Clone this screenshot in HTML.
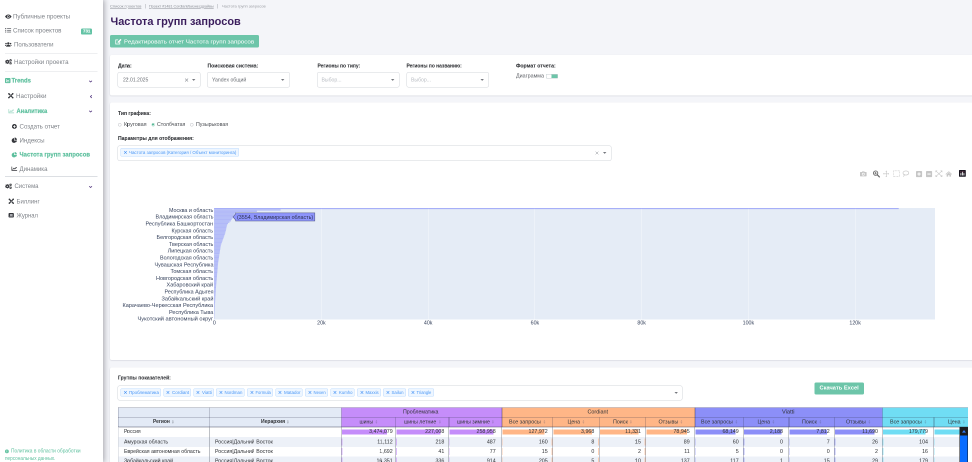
<!DOCTYPE html>
<html><head><meta charset="utf-8"><title>Частота групп запросов</title>
<style>
html,body{margin:0;padding:0;background:#f4f5f9;overflow:hidden;}
body{width:972px;height:462px;position:relative;font-family:"Liberation Sans",sans-serif;}
#w{position:absolute;left:0;top:0;width:1944px;height:924px;transform:scale(.5);transform-origin:0 0;overflow:hidden;will-change:transform;}
.t{position:absolute;white-space:nowrap;transform-origin:0 50%;font-family:"Liberation Sans",sans-serif;}
.r{position:absolute;box-sizing:border-box;}
svg{position:absolute;overflow:visible;}
</style></head><body><div id="w">
<div class="r" style="left:0.00px;top:0.00px;width:1944.00px;height:924.00px;background:#f4f5f9;"></div>
<div class="r" style="left:0.00px;top:0.00px;width:206.00px;height:924.00px;background:#ffffff;box-shadow:1.5px 0 11px 1px rgba(45,45,55,.40);"></div>
<span class="t" style="left:26.00px;top:26.32px;font-size:12.20px;line-height:14.64px;color:#7f8389;">Публичные проекты</span>
<span class="t" style="left:26.00px;top:54.32px;font-size:12.20px;line-height:14.64px;color:#7f8389;transform:scaleX(1.0196);">Список проектов</span>
<span class="t" style="left:28.20px;top:81.92px;font-size:12.20px;line-height:14.64px;color:#7f8389;transform:scaleX(0.9921);">Пользователи</span>
<div class="r" style="left:10.00px;top:105.60px;width:185.00px;height:1.40px;background:#dcdfe3;"></div>
<span class="t" style="left:28.20px;top:116.72px;font-size:12.20px;line-height:14.64px;color:#7f8389;transform:scaleX(1.0122);">Настройки проекта</span>
<div class="r" style="left:10.00px;top:141.60px;width:185.00px;height:1.40px;background:#dcdfe3;"></div>
<span class="t" style="left:23.00px;top:153.64px;font-size:12.60px;line-height:15.12px;color:#5cbf9d;font-weight:bold;transform:scaleX(0.9440);-webkit-text-stroke:0.3px #5cbf9d;">Trends</span>
<span class="t" style="left:32.00px;top:184.72px;font-size:12.20px;line-height:14.64px;color:#7f8389;transform:scaleX(1.0197);">Настройки</span>
<span class="t" style="left:33.40px;top:214.84px;font-size:12.60px;line-height:15.12px;color:#5cbf9d;font-weight:bold;transform:scaleX(0.9206);-webkit-text-stroke:0.3px #5cbf9d;">Аналитика</span>
<span class="t" style="left:39.00px;top:245.72px;font-size:12.20px;line-height:14.64px;color:#7f8389;transform:scaleX(1.0102);">Создать отчет</span>
<span class="t" style="left:39.00px;top:273.72px;font-size:12.20px;line-height:14.64px;color:#7f8389;transform:scaleX(1.0049);">Индексы</span>
<span class="t" style="left:39.00px;top:302.24px;font-size:12.60px;line-height:15.12px;color:#5cbf9d;font-weight:bold;transform:scaleX(0.9410);-webkit-text-stroke:0.3px #5cbf9d;">Частота групп запросов</span>
<span class="t" style="left:39.00px;top:330.52px;font-size:12.20px;line-height:14.64px;color:#7f8389;transform:scaleX(0.9966);">Динамика</span>
<div class="r" style="left:10.00px;top:352.40px;width:185.00px;height:1.40px;background:#dcdfe3;"></div>
<span class="t" style="left:29.20px;top:365.32px;font-size:12.20px;line-height:14.64px;color:#7f8389;transform:scaleX(0.9769);">Система</span>
<span class="t" style="left:32.60px;top:395.72px;font-size:12.20px;line-height:14.64px;color:#7f8389;transform:scaleX(0.9859);">Биллинг</span>
<span class="t" style="left:33.40px;top:423.72px;font-size:12.20px;line-height:14.64px;color:#7f8389;transform:scaleX(0.9614);">Журнал</span>
<div class="r" style="left:161.80px;top:57.20px;width:22.20px;height:12.00px;background:#63c3a5;border-radius:2.6px;"></div>
<span class="t" style="left:165.60px;top:57.49px;font-size:8.60px;line-height:10.32px;color:#fff;font-weight:bold;transform:scaleX(1.0314);-webkit-text-stroke:0.2px #fff;">731</span>
<span class="t" style="left:21.60px;top:895.66px;font-size:10.40px;line-height:12.48px;color:#5cbf9d;transform:scaleX(0.9337);">Политика в области обработки</span>
<span class="t" style="left:10.00px;top:910.66px;font-size:10.40px;line-height:12.48px;color:#5cbf9d;transform:scaleX(0.9056);">персональных данных.</span>
<span class="t" style="left:219.80px;top:8.04px;font-size:7.80px;line-height:9.36px;color:#8b8f96;transform:scaleX(1.0325);text-decoration:underline;">Список проектов</span>
<div class="r" style="left:290.40px;top:8.20px;width:1.10px;height:8.60px;background:#a9acb2;"></div>
<span class="t" style="left:298.20px;top:8.04px;font-size:7.80px;line-height:9.36px;color:#8b8f96;transform:scaleX(0.9494);text-decoration:underline;">Проект #1481 Cordiant/Бизнесдрайвы</span>
<div class="r" style="left:435.20px;top:8.20px;width:1.10px;height:8.60px;background:#a9acb2;"></div>
<span class="t" style="left:444.40px;top:8.04px;font-size:7.80px;line-height:9.36px;color:#989ba1;transform:scaleX(1.0143);">Частота групп запросов</span>
<span class="t" style="left:221.20px;top:29.61px;font-size:22.40px;line-height:26.88px;color:#3a1d5c;font-weight:bold;transform:scaleX(0.9783);">Частота групп запросов</span>
<div class="r" style="left:219.80px;top:70.40px;width:298.40px;height:25.00px;background:#6dc5a9;border-radius:3px;"></div>
<span class="t" style="left:247.60px;top:75.89px;font-size:11.80px;line-height:14.16px;color:#ffffff;transform:scaleX(1.0518);">Редактировать отчет Частота групп запросов</span>
<div class="r" style="left:219.60px;top:110.20px;width:1740.00px;height:80.60px;background:#ffffff;box-shadow:0 1px 2.5px rgba(60,60,90,.2);border-radius:3.5px 0 0 3.5px;"></div>
<div class="r" style="left:219.60px;top:204.80px;width:1740.00px;height:515.60px;background:#ffffff;box-shadow:0 1px 2.5px rgba(60,60,90,.2);border-radius:3.5px 0 0 3.5px;"></div>
<div class="r" style="left:219.60px;top:735.40px;width:1740.00px;height:200.00px;background:#ffffff;box-shadow:0 1px 2.5px rgba(60,60,90,.2);border-radius:3.5px 0 0 3.5px;"></div>
<span class="t" style="left:236.00px;top:126.26px;font-size:10.40px;line-height:12.48px;color:#2f3135;font-weight:bold;-webkit-text-stroke:0.12px #2f3135;">Дата:</span>
<span class="t" style="left:415.00px;top:126.26px;font-size:10.40px;line-height:12.48px;color:#2f3135;font-weight:bold;transform:scaleX(0.9776);-webkit-text-stroke:0.12px #2f3135;">Поисковая система:</span>
<span class="t" style="left:634.60px;top:126.26px;font-size:10.40px;line-height:12.48px;color:#2f3135;font-weight:bold;transform:scaleX(0.9489);-webkit-text-stroke:0.12px #2f3135;">Регионы по типу:</span>
<span class="t" style="left:813.40px;top:126.26px;font-size:10.40px;line-height:12.48px;color:#2f3135;font-weight:bold;transform:scaleX(0.9410);-webkit-text-stroke:0.12px #2f3135;">Регионы по названию:</span>
<span class="t" style="left:1032.00px;top:126.26px;font-size:10.40px;line-height:12.48px;color:#2f3135;font-weight:bold;transform:scaleX(0.9927);-webkit-text-stroke:0.12px #2f3135;">Формат отчета:</span>
<div class="r" style="left:235.20px;top:144.40px;width:166.20px;height:30.40px;background:#ffffff;border:1px solid #d3d6db;border-radius:4px;"></div>
<span class="t" style="left:245.60px;top:152.58px;font-size:10.80px;line-height:12.96px;color:#6b6f75;transform:scaleX(0.9361);">22.01.2025</span>
<svg style="left:384.20px;top:158.10px;" width="6.8" height="3.8" viewBox="0 0 3.4 1.9"><path d="M0 0H3.4L1.7 1.9Z" fill="#74777d"/></svg>
<svg style="left:370.00px;top:156.60px;" width="6.4" height="6.4" viewBox="0 0 3.2 3.2"><path d="M0.1 0.1L3.1 3.1M3.1 0.1L0.1 3.1" stroke="#858990" stroke-width="0.55" fill="none"/></svg>
<div class="r" style="left:414.20px;top:144.40px;width:165.40px;height:30.40px;background:#ffffff;border:1px solid #d3d6db;border-radius:4px;"></div>
<span class="t" style="left:423.60px;top:152.58px;font-size:10.80px;line-height:12.96px;color:#6b6f75;transform:scaleX(0.9504);">Yandex общий</span>
<svg style="left:562.40px;top:158.10px;" width="6.8" height="3.8" viewBox="0 0 3.4 1.9"><path d="M0 0H3.4L1.7 1.9Z" fill="#74777d"/></svg>
<div class="r" style="left:634.00px;top:144.40px;width:165.40px;height:30.40px;background:#ffffff;border:1px solid #d3d6db;border-radius:4px;"></div>
<span class="t" style="left:643.40px;top:152.58px;font-size:10.80px;line-height:12.96px;color:#b9bdc3;transform:scaleX(0.9486);">Выбор...</span>
<svg style="left:782.20px;top:158.10px;" width="6.8" height="3.8" viewBox="0 0 3.4 1.9"><path d="M0 0H3.4L1.7 1.9Z" fill="#74777d"/></svg>
<div class="r" style="left:812.60px;top:144.40px;width:165.40px;height:30.40px;background:#ffffff;border:1px solid #d3d6db;border-radius:4px;"></div>
<span class="t" style="left:822.00px;top:152.58px;font-size:10.80px;line-height:12.96px;color:#b9bdc3;transform:scaleX(0.9486);">Выбор...</span>
<svg style="left:960.80px;top:158.10px;" width="6.8" height="3.8" viewBox="0 0 3.4 1.9"><path d="M0 0H3.4L1.7 1.9Z" fill="#74777d"/></svg>
<span class="t" style="left:1032.00px;top:145.12px;font-size:10.60px;line-height:12.72px;color:#5d6066;transform:scaleX(1.0159);">Диаграмма</span>
<div class="r" style="left:1092.00px;top:148.00px;width:24.40px;height:9.00px;background:#6dc5a9;border:1px solid #c9ccd1;border-radius:1.5px;"></div>
<div class="r" style="left:1093.00px;top:149.00px;width:10.40px;height:7.00px;background:#ffffff;border-radius:1px;"></div>
<span class="t" style="left:236.00px;top:220.86px;font-size:10.40px;line-height:12.48px;color:#2f3135;font-weight:bold;transform:scaleX(0.9686);-webkit-text-stroke:0.12px #2f3135;">Тип графика:</span>
<div class="r" style="left:236.30px;top:245.50px;width:7.00px;height:7.00px;background:#ffffff;border-radius:50%;border:1px solid #b9bcc1;"></div>
<span class="t" style="left:248.40px;top:241.58px;font-size:10.80px;line-height:12.96px;color:#4a4d52;transform:scaleX(1.0099);">Круговая</span>
<div class="r" style="left:302.50px;top:245.50px;width:7.00px;height:7.00px;background:#ffffff;border-radius:50%;border:1px solid #9bd3c0;"></div>
<div class="r" style="left:303.90px;top:246.90px;width:4.20px;height:4.20px;background:#4fb592;border-radius:50%;"></div>
<span class="t" style="left:314.20px;top:241.58px;font-size:10.80px;line-height:12.96px;color:#4a4d52;transform:scaleX(0.9693);">Столбчатая</span>
<div class="r" style="left:380.10px;top:245.50px;width:7.00px;height:7.00px;background:#ffffff;border-radius:50%;border:1px solid #b9bcc1;"></div>
<span class="t" style="left:391.60px;top:241.58px;font-size:10.80px;line-height:12.96px;color:#4a4d52;transform:scaleX(0.9752);">Пузырьковая</span>
<span class="t" style="left:236.00px;top:271.46px;font-size:10.40px;line-height:12.48px;color:#2f3135;font-weight:bold;transform:scaleX(0.9774);-webkit-text-stroke:0.12px #2f3135;">Параметры для отображения:</span>
<div class="r" style="left:235.20px;top:290.60px;width:987.40px;height:31.00px;background:#ffffff;border:1px solid #d3d6db;border-radius:4px;"></div>
<div class="r" style="left:241.40px;top:296.00px;width:236.60px;height:17.40px;background:#eef6ff;border:1px solid #bfdcfe;border-radius:2px;"></div>
<svg style="left:247.90px;top:301.90px;" width="5.8" height="5.8" viewBox="0 0 2.9 2.9"><path d="M0.1 0.1L2.8 2.8M2.8 0.1L0.1 2.8" stroke="#3a8cf5" stroke-width="0.52" fill="none"/></svg>
<span class="t" style="left:258.40px;top:298.54px;font-size:9.40px;line-height:11.28px;color:#4a97f6;transform:scaleX(0.9417);">Частота запросов (Категория / Объект мониторинга)</span>
<svg style="left:1190.80px;top:302.80px;" width="6.0" height="6.0" viewBox="0 0 3.0 3.0"><path d="M0.1 0.1L2.9 2.9M2.9 0.1L0.1 2.9" stroke="#8d9096" stroke-width="0.5" fill="none"/></svg>
<svg style="left:1206.20px;top:304.10px;" width="6.8" height="3.8" viewBox="0 0 3.4 1.9"><path d="M0 0H3.4L1.7 1.9Z" fill="#74777d"/></svg>
<span class="t" style="left:236.00px;top:750.26px;font-size:10.40px;line-height:12.48px;color:#2f3135;font-weight:bold;transform:scaleX(0.9672);-webkit-text-stroke:0.12px #2f3135;">Группы показателей:</span>
<div class="r" style="left:235.20px;top:770.80px;width:1130.20px;height:29.80px;background:#ffffff;border:1px solid #d3d6db;border-radius:4px;"></div>
<div class="r" style="left:241.00px;top:776.60px;width:81.40px;height:16.60px;background:#eef6ff;border:1px solid #bfdcfe;border-radius:2px;"></div>
<svg style="left:247.50px;top:782.10px;" width="5.8" height="5.8" viewBox="0 0 2.9 2.9"><path d="M0.1 0.1L2.8 2.8M2.8 0.1L0.1 2.8" stroke="#3a8cf5" stroke-width="0.52" fill="none"/></svg>
<span class="t" style="left:258.00px;top:778.74px;font-size:9.40px;line-height:11.28px;color:#4a97f6;transform:scaleX(0.9453);">Проблематика</span>
<div class="r" style="left:326.60px;top:776.60px;width:55.80px;height:16.60px;background:#eef6ff;border:1px solid #bfdcfe;border-radius:2px;"></div>
<svg style="left:333.10px;top:782.10px;" width="5.8" height="5.8" viewBox="0 0 2.9 2.9"><path d="M0.1 0.1L2.8 2.8M2.8 0.1L0.1 2.8" stroke="#3a8cf5" stroke-width="0.52" fill="none"/></svg>
<span class="t" style="left:343.60px;top:778.74px;font-size:9.40px;line-height:11.28px;color:#4a97f6;transform:scaleX(0.9682);">Cordiant</span>
<div class="r" style="left:386.60px;top:776.60px;width:41.20px;height:16.60px;background:#eef6ff;border:1px solid #bfdcfe;border-radius:2px;"></div>
<svg style="left:393.10px;top:782.10px;" width="5.8" height="5.8" viewBox="0 0 2.9 2.9"><path d="M0.1 0.1L2.8 2.8M2.8 0.1L0.1 2.8" stroke="#3a8cf5" stroke-width="0.52" fill="none"/></svg>
<span class="t" style="left:403.60px;top:778.74px;font-size:9.40px;line-height:11.28px;color:#4a97f6;transform:scaleX(0.9552);">Viatti</span>
<div class="r" style="left:432.20px;top:776.60px;width:57.20px;height:16.60px;background:#eef6ff;border:1px solid #bfdcfe;border-radius:2px;"></div>
<svg style="left:438.70px;top:782.10px;" width="5.8" height="5.8" viewBox="0 0 2.9 2.9"><path d="M0.1 0.1L2.8 2.8M2.8 0.1L0.1 2.8" stroke="#3a8cf5" stroke-width="0.52" fill="none"/></svg>
<span class="t" style="left:449.20px;top:778.74px;font-size:9.40px;line-height:11.28px;color:#4a97f6;transform:scaleX(0.9260);">Nordman</span>
<div class="r" style="left:494.00px;top:776.60px;width:52.20px;height:16.60px;background:#eef6ff;border:1px solid #bfdcfe;border-radius:2px;"></div>
<svg style="left:500.50px;top:782.10px;" width="5.8" height="5.8" viewBox="0 0 2.9 2.9"><path d="M0.1 0.1L2.8 2.8M2.8 0.1L0.1 2.8" stroke="#3a8cf5" stroke-width="0.52" fill="none"/></svg>
<span class="t" style="left:511.00px;top:778.74px;font-size:9.40px;line-height:11.28px;color:#4a97f6;transform:scaleX(0.8934);">Formula</span>
<div class="r" style="left:550.80px;top:776.60px;width:54.40px;height:16.60px;background:#eef6ff;border:1px solid #bfdcfe;border-radius:2px;"></div>
<svg style="left:557.30px;top:782.10px;" width="5.8" height="5.8" viewBox="0 0 2.9 2.9"><path d="M0.1 0.1L2.8 2.8M2.8 0.1L0.1 2.8" stroke="#3a8cf5" stroke-width="0.52" fill="none"/></svg>
<span class="t" style="left:567.80px;top:778.74px;font-size:9.40px;line-height:11.28px;color:#4a97f6;transform:scaleX(0.9569);">Matador</span>
<div class="r" style="left:610.00px;top:776.60px;width:46.00px;height:16.60px;background:#eef6ff;border:1px solid #bfdcfe;border-radius:2px;"></div>
<svg style="left:616.50px;top:782.10px;" width="5.8" height="5.8" viewBox="0 0 2.9 2.9"><path d="M0.1 0.1L2.8 2.8M2.8 0.1L0.1 2.8" stroke="#3a8cf5" stroke-width="0.52" fill="none"/></svg>
<span class="t" style="left:627.00px;top:778.74px;font-size:9.40px;line-height:11.28px;color:#4a97f6;transform:scaleX(0.9053);">Nexen</span>
<div class="r" style="left:660.60px;top:776.60px;width:48.60px;height:16.60px;background:#eef6ff;border:1px solid #bfdcfe;border-radius:2px;"></div>
<svg style="left:667.10px;top:782.10px;" width="5.8" height="5.8" viewBox="0 0 2.9 2.9"><path d="M0.1 0.1L2.8 2.8M2.8 0.1L0.1 2.8" stroke="#3a8cf5" stroke-width="0.52" fill="none"/></svg>
<span class="t" style="left:677.60px;top:778.74px;font-size:9.40px;line-height:11.28px;color:#4a97f6;transform:scaleX(0.9132);">Kumho</span>
<div class="r" style="left:714.00px;top:776.60px;width:47.80px;height:16.60px;background:#eef6ff;border:1px solid #bfdcfe;border-radius:2px;"></div>
<svg style="left:720.50px;top:782.10px;" width="5.8" height="5.8" viewBox="0 0 2.9 2.9"><path d="M0.1 0.1L2.8 2.8M2.8 0.1L0.1 2.8" stroke="#3a8cf5" stroke-width="0.52" fill="none"/></svg>
<span class="t" style="left:731.00px;top:778.74px;font-size:9.40px;line-height:11.28px;color:#4a97f6;transform:scaleX(0.9026);">Maxxis</span>
<div class="r" style="left:766.40px;top:776.60px;width:45.40px;height:16.60px;background:#eef6ff;border:1px solid #bfdcfe;border-radius:2px;"></div>
<svg style="left:772.90px;top:782.10px;" width="5.8" height="5.8" viewBox="0 0 2.9 2.9"><path d="M0.1 0.1L2.8 2.8M2.8 0.1L0.1 2.8" stroke="#3a8cf5" stroke-width="0.52" fill="none"/></svg>
<span class="t" style="left:783.40px;top:778.74px;font-size:9.40px;line-height:11.28px;color:#4a97f6;transform:scaleX(0.9184);">Sailun</span>
<div class="r" style="left:816.40px;top:776.60px;width:51.20px;height:16.60px;background:#eef6ff;border:1px solid #bfdcfe;border-radius:2px;"></div>
<svg style="left:822.90px;top:782.10px;" width="5.8" height="5.8" viewBox="0 0 2.9 2.9"><path d="M0.1 0.1L2.8 2.8M2.8 0.1L0.1 2.8" stroke="#3a8cf5" stroke-width="0.52" fill="none"/></svg>
<span class="t" style="left:833.40px;top:778.74px;font-size:9.40px;line-height:11.28px;color:#4a97f6;transform:scaleX(0.8866);">Triangle</span>
<svg style="left:1348.60px;top:784.10px;" width="6.8" height="3.8" viewBox="0 0 3.4 1.9"><path d="M0 0H3.4L1.7 1.9Z" fill="#74777d"/></svg>
<div class="r" style="left:1628.60px;top:764.60px;width:99.40px;height:24.00px;background:#6dc5a9;border-radius:3px;"></div>
<span class="t" style="left:1639.30px;top:768.91px;font-size:11.20px;line-height:13.44px;color:#ffffff;font-weight:bold;transform:scaleX(1.0191);">Скачать Excel</span>
<div class="r" style="left:428.20px;top:415.80px;width:1441.40px;height:223.00px;background:#e5ecf6;"></div>
<span class="t" style="left:425.75px;top:638.92px;font-size:10.60px;line-height:12.72px;color:#36425c;">0</span>
<div class="r" style="left:642.24px;top:415.80px;width:1.12px;height:223.00px;background:rgba(255,255,255,.62);"></div>
<span class="t" style="left:634.25px;top:638.92px;font-size:10.60px;line-height:12.72px;color:#36425c;">20k</span>
<div class="r" style="left:855.74px;top:415.80px;width:1.12px;height:223.00px;background:rgba(255,255,255,.62);"></div>
<span class="t" style="left:847.75px;top:638.92px;font-size:10.60px;line-height:12.72px;color:#36425c;">40k</span>
<div class="r" style="left:1069.24px;top:415.80px;width:1.12px;height:223.00px;background:rgba(255,255,255,.62);"></div>
<span class="t" style="left:1061.25px;top:638.92px;font-size:10.60px;line-height:12.72px;color:#36425c;">60k</span>
<div class="r" style="left:1282.74px;top:415.80px;width:1.12px;height:223.00px;background:rgba(255,255,255,.62);"></div>
<span class="t" style="left:1274.75px;top:638.92px;font-size:10.60px;line-height:12.72px;color:#36425c;">80k</span>
<div class="r" style="left:1496.24px;top:415.80px;width:1.12px;height:223.00px;background:rgba(255,255,255,.62);"></div>
<span class="t" style="left:1485.31px;top:638.92px;font-size:10.60px;line-height:12.72px;color:#36425c;">100k</span>
<div class="r" style="left:1709.74px;top:415.80px;width:1.12px;height:223.00px;background:rgba(255,255,255,.62);"></div>
<span class="t" style="left:1698.81px;top:638.92px;font-size:10.60px;line-height:12.72px;color:#36425c;">120k</span>
<svg style="left:0;top:0;" width="1944.0" height="924.0" viewBox="0 0 972 462"><polygon points="214.1,209.25975609756097 280.60,209.26 280.60,210.62 256.90,210.62 256.90,211.98 235.90,211.98 235.90,213.34 234.60,213.34 234.60,214.70 233.60,214.70 233.60,216.06 233.00,216.06 233.00,217.42 232.60,217.42 232.60,218.78 231.60,218.78 231.60,220.14 230.80,220.14 230.80,221.50 229.40,221.50 229.40,222.86 228.00,222.86 228.00,224.22 227.10,224.22 227.10,225.58 226.70,225.58 226.70,226.94 226.45,226.94 226.45,228.30 226.20,228.30 226.20,229.66 225.87,229.66 225.87,231.02 225.53,231.02 225.53,232.38 225.20,232.38 225.20,233.74 224.73,233.74 224.73,235.10 224.27,235.10 224.27,236.45 223.80,236.45 223.80,237.81 223.30,237.81 223.30,239.17 222.80,239.17 222.80,240.53 222.30,240.53 222.30,241.89 221.80,241.89 221.80,243.25 221.30,243.25 221.30,244.61 220.80,244.61 220.80,245.97 220.60,245.97 220.60,247.33 220.40,247.33 220.40,248.69 220.20,248.69 220.20,250.05 220.00,250.05 220.00,251.41 219.78,251.41 219.78,252.77 219.56,252.77 219.56,254.13 219.34,254.13 219.34,255.49 219.12,255.49 219.12,256.85 218.90,256.85 218.90,258.21 218.70,258.21 218.70,259.57 218.50,259.57 218.50,260.93 218.30,260.93 218.30,262.29 218.10,262.29 218.10,263.65 217.90,263.65 217.90,265.01 217.80,265.01 217.80,266.37 217.70,266.37 217.70,267.73 217.60,267.73 217.60,269.09 217.50,269.09 217.50,270.45 217.40,270.45 217.40,271.81 217.28,271.81 217.28,273.17 217.16,273.17 217.16,274.53 217.04,274.53 217.04,275.89 216.92,275.89 216.92,277.25 216.80,277.25 216.80,278.61 216.68,278.61 216.68,279.97 216.56,279.97 216.56,281.33 216.44,281.33 216.44,282.69 216.32,282.69 216.32,284.05 216.20,284.05 216.20,285.41 216.10,285.41 216.10,286.77 216.00,286.77 216.00,288.13 215.90,288.13 215.90,289.49 215.80,289.49 215.80,290.85 215.70,290.85 215.70,292.20 215.62,292.20 215.62,293.56 215.54,293.56 215.54,294.92 215.46,294.92 215.46,296.28 215.38,296.28 215.38,297.64 215.30,297.64 215.30,299.00 215.22,299.00 215.22,300.36 215.14,300.36 215.14,301.72 215.06,301.72 215.06,303.08 214.98,303.08 214.98,304.44 214.90,304.44 214.90,305.80 214.84,305.80 214.84,307.16 214.78,307.16 214.78,308.52 214.72,308.52 214.72,309.88 214.66,309.88 214.66,311.24 214.60,311.24 214.60,312.60 214.55,312.60 214.55,313.96 214.50,313.96 214.50,315.32 214.45,315.32 214.45,316.68 214.40,316.68 214.40,318.04 214.35,318.04 214.35,319.40 214.1,319.4" fill="#636efa" fill-opacity="0.22"/><rect x="214.1" y="208.036" width="684.60" height="1.088" fill="#636efa" fill-opacity="0.5"/><rect x="214.1" y="209.396" width="66.50" height="1.088" fill="#636efa" fill-opacity="0.24"/><rect x="214.1" y="210.755" width="42.80" height="1.088" fill="#636efa" fill-opacity="0.24"/><rect x="214.1" y="212.115" width="21.80" height="1.088" fill="#636efa" fill-opacity="0.24"/><rect x="214.1" y="213.475" width="20.50" height="1.088" fill="#636efa" fill-opacity="0.24"/><rect x="214.1" y="214.835" width="19.50" height="1.088" fill="#636efa" fill-opacity="0.24"/><rect x="214.1" y="216.195" width="18.90" height="1.088" fill="#636efa" fill-opacity="0.24"/><rect x="214.1" y="217.554" width="18.50" height="1.088" fill="#636efa" fill-opacity="0.24"/><rect x="214.1" y="218.914" width="17.50" height="1.088" fill="#636efa" fill-opacity="0.24"/><rect x="214.1" y="220.274" width="16.70" height="1.088" fill="#636efa" fill-opacity="0.24"/><rect x="214.1" y="221.634" width="15.30" height="1.088" fill="#636efa" fill-opacity="0.24"/><rect x="214.1" y="222.993" width="13.90" height="1.088" fill="#636efa" fill-opacity="0.24"/><rect x="214.1" y="224.353" width="13.00" height="1.088" fill="#636efa" fill-opacity="0.24"/><rect x="214.1" y="225.713" width="12.60" height="1.088" fill="#636efa" fill-opacity="0.24"/><rect x="214.1" y="227.073" width="12.35" height="1.088" fill="#636efa" fill-opacity="0.24"/><rect x="214.1" y="228.432" width="12.10" height="1.088" fill="#636efa" fill-opacity="0.24"/><rect x="214.1" y="229.792" width="11.77" height="1.088" fill="#636efa" fill-opacity="0.24"/><rect x="214.1" y="231.152" width="11.43" height="1.088" fill="#636efa" fill-opacity="0.24"/><rect x="214.1" y="232.512" width="11.10" height="1.088" fill="#636efa" fill-opacity="0.24"/><rect x="214.1" y="233.871" width="10.63" height="1.088" fill="#636efa" fill-opacity="0.24"/><rect x="214.1" y="235.231" width="10.17" height="1.088" fill="#636efa" fill-opacity="0.24"/><rect x="214.1" y="236.591" width="9.70" height="1.088" fill="#636efa" fill-opacity="0.24"/><rect x="214.1" y="237.951" width="9.20" height="1.088" fill="#636efa" fill-opacity="0.24"/><rect x="214.1" y="239.310" width="8.70" height="1.088" fill="#636efa" fill-opacity="0.24"/><rect x="214.1" y="240.670" width="8.20" height="1.088" fill="#636efa" fill-opacity="0.24"/><rect x="214.1" y="242.030" width="7.70" height="1.088" fill="#636efa" fill-opacity="0.24"/><rect x="214.1" y="243.390" width="7.20" height="1.088" fill="#636efa" fill-opacity="0.24"/><rect x="214.1" y="244.749" width="6.70" height="1.088" fill="#636efa" fill-opacity="0.24"/><rect x="214.1" y="246.109" width="6.50" height="1.088" fill="#636efa" fill-opacity="0.24"/><rect x="214.1" y="247.469" width="6.30" height="1.088" fill="#636efa" fill-opacity="0.24"/><rect x="214.1" y="248.829" width="6.10" height="1.088" fill="#636efa" fill-opacity="0.24"/><rect x="214.1" y="250.188" width="5.90" height="1.088" fill="#636efa" fill-opacity="0.24"/><rect x="214.1" y="251.548" width="5.68" height="1.088" fill="#636efa" fill-opacity="0.24"/><rect x="214.1" y="252.908" width="5.46" height="1.088" fill="#636efa" fill-opacity="0.24"/><rect x="214.1" y="254.268" width="5.24" height="1.088" fill="#636efa" fill-opacity="0.24"/><rect x="214.1" y="255.627" width="5.02" height="1.088" fill="#636efa" fill-opacity="0.24"/><rect x="214.1" y="256.987" width="4.80" height="1.088" fill="#636efa" fill-opacity="0.24"/><rect x="214.1" y="258.347" width="4.60" height="1.088" fill="#636efa" fill-opacity="0.24"/><rect x="214.1" y="259.707" width="4.40" height="1.088" fill="#636efa" fill-opacity="0.24"/><rect x="214.1" y="261.066" width="4.20" height="1.088" fill="#636efa" fill-opacity="0.24"/><rect x="214.1" y="262.426" width="4.00" height="1.088" fill="#636efa" fill-opacity="0.24"/><rect x="214.1" y="263.786" width="3.80" height="1.088" fill="#636efa" fill-opacity="0.24"/><rect x="214.1" y="265.146" width="3.70" height="1.088" fill="#636efa" fill-opacity="0.24"/><rect x="214.1" y="266.505" width="3.60" height="1.088" fill="#636efa" fill-opacity="0.24"/><rect x="214.1" y="267.865" width="3.50" height="1.088" fill="#636efa" fill-opacity="0.24"/><rect x="214.1" y="269.225" width="3.40" height="1.088" fill="#636efa" fill-opacity="0.24"/><rect x="214.1" y="270.585" width="3.30" height="1.088" fill="#636efa" fill-opacity="0.24"/><rect x="214.1" y="271.945" width="3.18" height="1.088" fill="#636efa" fill-opacity="0.24"/><rect x="214.1" y="273.304" width="3.06" height="1.088" fill="#636efa" fill-opacity="0.24"/><rect x="214.1" y="274.664" width="2.94" height="1.088" fill="#636efa" fill-opacity="0.24"/><rect x="214.1" y="276.024" width="2.82" height="1.088" fill="#636efa" fill-opacity="0.24"/><rect x="214.1" y="277.384" width="2.70" height="1.088" fill="#636efa" fill-opacity="0.24"/><rect x="214.1" y="278.743" width="2.58" height="1.088" fill="#636efa" fill-opacity="0.24"/><rect x="214.1" y="280.103" width="2.46" height="1.088" fill="#636efa" fill-opacity="0.24"/><rect x="214.1" y="281.463" width="2.34" height="1.088" fill="#636efa" fill-opacity="0.24"/><rect x="214.1" y="282.823" width="2.22" height="1.088" fill="#636efa" fill-opacity="0.24"/><rect x="214.1" y="284.182" width="2.10" height="1.088" fill="#636efa" fill-opacity="0.24"/><rect x="214.1" y="285.542" width="2.00" height="1.088" fill="#636efa" fill-opacity="0.24"/><rect x="214.1" y="286.902" width="1.90" height="1.088" fill="#636efa" fill-opacity="0.24"/><rect x="214.1" y="288.262" width="1.80" height="1.088" fill="#636efa" fill-opacity="0.24"/><rect x="214.1" y="289.621" width="1.70" height="1.088" fill="#636efa" fill-opacity="0.24"/><rect x="214.1" y="290.981" width="1.60" height="1.088" fill="#636efa" fill-opacity="0.24"/><rect x="214.1" y="292.341" width="1.52" height="1.088" fill="#636efa" fill-opacity="0.24"/><rect x="214.1" y="293.701" width="1.44" height="1.088" fill="#636efa" fill-opacity="0.24"/><rect x="214.1" y="295.060" width="1.36" height="1.088" fill="#636efa" fill-opacity="0.24"/><rect x="214.1" y="296.420" width="1.28" height="1.088" fill="#636efa" fill-opacity="0.24"/><rect x="214.1" y="297.780" width="1.20" height="1.088" fill="#636efa" fill-opacity="0.24"/><rect x="214.1" y="299.140" width="1.12" height="1.088" fill="#636efa" fill-opacity="0.24"/><rect x="214.1" y="300.499" width="1.04" height="1.088" fill="#636efa" fill-opacity="0.24"/><rect x="214.1" y="301.859" width="0.96" height="1.088" fill="#636efa" fill-opacity="0.24"/><rect x="214.1" y="303.219" width="0.88" height="1.088" fill="#636efa" fill-opacity="0.24"/><rect x="214.1" y="304.579" width="0.80" height="1.088" fill="#636efa" fill-opacity="0.24"/><rect x="214.1" y="305.938" width="0.74" height="1.088" fill="#636efa" fill-opacity="0.24"/><rect x="214.1" y="307.298" width="0.68" height="1.088" fill="#636efa" fill-opacity="0.24"/><rect x="214.1" y="308.658" width="0.62" height="1.088" fill="#636efa" fill-opacity="0.24"/><rect x="214.1" y="310.018" width="0.56" height="1.088" fill="#636efa" fill-opacity="0.24"/><rect x="214.1" y="311.377" width="0.50" height="1.088" fill="#636efa" fill-opacity="0.24"/><rect x="214.1" y="312.737" width="0.45" height="1.088" fill="#636efa" fill-opacity="0.24"/><rect x="214.1" y="314.097" width="0.40" height="1.088" fill="#636efa" fill-opacity="0.24"/><rect x="214.1" y="315.457" width="0.35" height="1.088" fill="#636efa" fill-opacity="0.24"/><rect x="214.1" y="316.816" width="0.30" height="1.088" fill="#636efa" fill-opacity="0.24"/><rect x="214.1" y="318.176" width="0.25" height="1.088" fill="#636efa" fill-opacity="0.24"/><path d="M233.0 216.95L235.6 213.95V212.9H314.8V221.0H235.6V219.95Z" fill="#8d94fb" stroke="#545a86" stroke-width=".55"/></svg>
<span class="t" style="left:474.00px;top:427.92px;font-size:10.60px;line-height:12.72px;color:#2b3050;transform:scaleX(1.0100);">(3554, Владимирская область)</span>
<span class="t" style="left:338.00px;top:413.76px;font-size:10.80px;line-height:12.96px;color:#36425c;transform:scaleX(0.9967);">Москва и область</span>
<span class="t" style="left:310.60px;top:427.36px;font-size:10.80px;line-height:12.96px;color:#36425c;transform:scaleX(0.9956);">Владимирская область</span>
<span class="t" style="left:291.40px;top:440.95px;font-size:10.80px;line-height:12.96px;color:#36425c;transform:scaleX(1.0172);">Республика Башкортостан</span>
<span class="t" style="left:343.40px;top:454.55px;font-size:10.80px;line-height:12.96px;color:#36425c;transform:scaleX(1.0050);">Курская область</span>
<span class="t" style="left:313.40px;top:468.15px;font-size:10.80px;line-height:12.96px;color:#36425c;transform:scaleX(1.0104);">Белгородская область</span>
<span class="t" style="left:338.00px;top:481.75px;font-size:10.80px;line-height:12.96px;color:#36425c;transform:scaleX(0.9960);">Тверская область</span>
<span class="t" style="left:335.40px;top:495.35px;font-size:10.80px;line-height:12.96px;color:#36425c;">Липецкая область</span>
<span class="t" style="left:320.00px;top:508.94px;font-size:10.80px;line-height:12.96px;color:#36425c;">Вологодская область</span>
<span class="t" style="left:308.60px;top:522.54px;font-size:10.80px;line-height:12.96px;color:#36425c;transform:scaleX(1.0119);">Чувашская Республика</span>
<span class="t" style="left:341.40px;top:536.14px;font-size:10.80px;line-height:12.96px;color:#36425c;transform:scaleX(1.0096);">Томская область</span>
<span class="t" style="left:312.00px;top:549.74px;font-size:10.80px;line-height:12.96px;color:#36425c;transform:scaleX(1.0183);">Новгородская область</span>
<span class="t" style="left:333.40px;top:563.33px;font-size:10.80px;line-height:12.96px;color:#36425c;transform:scaleX(1.0270);">Хабаровский край</span>
<span class="t" style="left:328.60px;top:576.93px;font-size:10.80px;line-height:12.96px;color:#36425c;transform:scaleX(0.9966);">Республика Адыгея</span>
<span class="t" style="left:322.60px;top:590.53px;font-size:10.80px;line-height:12.96px;color:#36425c;transform:scaleX(1.0260);">Забайкальский край</span>
<span class="t" style="left:245.40px;top:604.13px;font-size:10.80px;line-height:12.96px;color:#36425c;transform:scaleX(1.0288);">Карачаево-Черкесская Республика</span>
<span class="t" style="left:338.00px;top:617.72px;font-size:10.80px;line-height:12.96px;color:#36425c;transform:scaleX(1.0182);">Республика Тыва</span>
<span class="t" style="left:275.40px;top:631.32px;font-size:10.80px;line-height:12.96px;color:#36425c;transform:scaleX(1.0523);">Чукотский автономный округ</span>
<div class="r" style="left:236.20px;top:815.20px;width:446.40px;height:38.80px;background:#e3eaf6;"></div>
<div class="r" style="left:682.60px;top:815.20px;width:321.40px;height:38.80px;background:#c58dfa;"></div>
<span class="t" style="left:805.90px;top:818.06px;font-size:10.40px;line-height:12.48px;color:#2f3135;transform:scaleX(1.0110);">Проблематика</span>
<div class="r" style="left:1004.00px;top:815.20px;width:386.00px;height:38.80px;background:#ffb687;"></div>
<span class="t" style="left:1174.90px;top:818.06px;font-size:10.40px;line-height:12.48px;color:#2f3135;transform:scaleX(1.0430);">Cordiant</span>
<div class="r" style="left:1390.00px;top:815.20px;width:374.60px;height:38.80px;background:#8c8ff8;"></div>
<span class="t" style="left:1563.50px;top:818.06px;font-size:10.40px;line-height:12.48px;color:#2f3135;transform:scaleX(1.0901);">Viatti</span>
<div class="r" style="left:1764.60px;top:815.20px;width:171.40px;height:38.80px;background:#70ddf4;"></div>
<div class="r" style="left:236.20px;top:854.00px;width:1699.80px;height:20.40px;background:#ffffff;"></div>
<div class="r" style="left:236.20px;top:874.40px;width:1699.80px;height:19.20px;background:#edf1f8;"></div>
<div class="r" style="left:236.20px;top:893.60px;width:1699.80px;height:19.20px;background:#ffffff;"></div>
<div class="r" style="left:236.20px;top:912.80px;width:1699.80px;height:19.20px;background:#edf1f8;"></div>
<span class="t" style="left:306.30px;top:836.86px;font-size:10.40px;line-height:12.48px;color:#2f3135;font-weight:bold;transform:scaleX(0.9436);">Регион</span>
<svg style="left:344.40px;top:840.00px;" width="3.6" height="7.6" viewBox="0 0 1.8 3.8"><path d="M0 1.5L0.9 0L1.8 1.5ZM0 2.3L0.9 3.8L1.8 2.3Z" fill="#9aa0ab"/></svg>
<span class="t" style="left:521.90px;top:836.86px;font-size:10.40px;line-height:12.48px;color:#2f3135;font-weight:bold;transform:scaleX(0.9667);">Иерархия</span>
<svg style="left:574.00px;top:840.00px;" width="3.6" height="7.6" viewBox="0 0 1.8 3.8"><path d="M0 1.5L0.9 0L1.8 1.5ZM0 2.3L0.9 3.8L1.8 2.3Z" fill="#9aa0ab"/></svg>
<span class="t" style="left:718.90px;top:836.92px;font-size:10.60px;line-height:12.72px;color:#33363b;transform:scaleX(0.9750);">шины</span>
<svg style="left:751.10px;top:840.20px;" width="3.6" height="7.6" viewBox="0 0 1.8 3.8"><path d="M0 1.5L0.9 0L1.8 1.5ZM0 2.3L0.9 3.8L1.8 2.3Z" fill="rgba(70,70,95,.32)"/></svg>
<span class="t" style="left:807.90px;top:836.92px;font-size:10.60px;line-height:12.72px;color:#33363b;transform:scaleX(0.9924);">шины летние</span>
<svg style="left:877.50px;top:840.20px;" width="3.6" height="7.6" viewBox="0 0 1.8 3.8"><path d="M0 1.5L0.9 0L1.8 1.5ZM0 2.3L0.9 3.8L1.8 2.3Z" fill="rgba(70,70,95,.32)"/></svg>
<span class="t" style="left:913.50px;top:836.92px;font-size:10.60px;line-height:12.72px;color:#33363b;transform:scaleX(0.9883);">шины зимние</span>
<svg style="left:984.30px;top:840.20px;" width="3.6" height="7.6" viewBox="0 0 1.8 3.8"><path d="M0 1.5L0.9 0L1.8 1.5ZM0 2.3L0.9 3.8L1.8 2.3Z" fill="rgba(70,70,95,.32)"/></svg>
<span class="t" style="left:1018.40px;top:836.92px;font-size:10.60px;line-height:12.72px;color:#33363b;transform:scaleX(1.0190);">Все запросы</span>
<svg style="left:1087.00px;top:840.20px;" width="3.6" height="7.6" viewBox="0 0 1.8 3.8"><path d="M0 1.5L0.9 0L1.8 1.5ZM0 2.3L0.9 3.8L1.8 2.3Z" fill="rgba(70,70,95,.32)"/></svg>
<span class="t" style="left:1135.00px;top:836.92px;font-size:10.60px;line-height:12.72px;color:#33363b;transform:scaleX(0.9809);">Цена</span>
<svg style="left:1165.00px;top:840.20px;" width="3.6" height="7.6" viewBox="0 0 1.8 3.8"><path d="M0 1.5L0.9 0L1.8 1.5ZM0 2.3L0.9 3.8L1.8 2.3Z" fill="rgba(70,70,95,.32)"/></svg>
<span class="t" style="left:1225.70px;top:836.92px;font-size:10.60px;line-height:12.72px;color:#33363b;transform:scaleX(1.0077);">Поиск</span>
<svg style="left:1260.30px;top:840.20px;" width="3.6" height="7.6" viewBox="0 0 1.8 3.8"><path d="M0 1.5L0.9 0L1.8 1.5ZM0 2.3L0.9 3.8L1.8 2.3Z" fill="rgba(70,70,95,.32)"/></svg>
<span class="t" style="left:1316.50px;top:836.92px;font-size:10.60px;line-height:12.72px;color:#33363b;transform:scaleX(1.0147);">Отзывы</span>
<svg style="left:1360.90px;top:840.20px;" width="3.6" height="7.6" viewBox="0 0 1.8 3.8"><path d="M0 1.5L0.9 0L1.8 1.5ZM0 2.3L0.9 3.8L1.8 2.3Z" fill="rgba(70,70,95,.32)"/></svg>
<span class="t" style="left:1401.90px;top:836.92px;font-size:10.60px;line-height:12.72px;color:#33363b;transform:scaleX(1.0190);">Все запросы</span>
<svg style="left:1470.50px;top:840.20px;" width="3.6" height="7.6" viewBox="0 0 1.8 3.8"><path d="M0 1.5L0.9 0L1.8 1.5ZM0 2.3L0.9 3.8L1.8 2.3Z" fill="rgba(70,70,95,.32)"/></svg>
<span class="t" style="left:1515.20px;top:836.92px;font-size:10.60px;line-height:12.72px;color:#33363b;transform:scaleX(0.9809);">Цена</span>
<svg style="left:1545.20px;top:840.20px;" width="3.6" height="7.6" viewBox="0 0 1.8 3.8"><path d="M0 1.5L0.9 0L1.8 1.5ZM0 2.3L0.9 3.8L1.8 2.3Z" fill="rgba(70,70,95,.32)"/></svg>
<span class="t" style="left:1603.90px;top:836.92px;font-size:10.60px;line-height:12.72px;color:#33363b;transform:scaleX(1.0077);">Поиск</span>
<svg style="left:1638.50px;top:840.20px;" width="3.6" height="7.6" viewBox="0 0 1.8 3.8"><path d="M0 1.5L0.9 0L1.8 1.5ZM0 2.3L0.9 3.8L1.8 2.3Z" fill="rgba(70,70,95,.32)"/></svg>
<span class="t" style="left:1692.30px;top:836.92px;font-size:10.60px;line-height:12.72px;color:#33363b;transform:scaleX(1.0147);">Отзывы</span>
<svg style="left:1736.70px;top:840.20px;" width="3.6" height="7.6" viewBox="0 0 1.8 3.8"><path d="M0 1.5L0.9 0L1.8 1.5ZM0 2.3L0.9 3.8L1.8 2.3Z" fill="rgba(70,70,95,.32)"/></svg>
<span class="t" style="left:1779.90px;top:836.92px;font-size:10.60px;line-height:12.72px;color:#33363b;transform:scaleX(1.0190);">Все запросы</span>
<svg style="left:1848.50px;top:840.20px;" width="3.6" height="7.6" viewBox="0 0 1.8 3.8"><path d="M0 1.5L0.9 0L1.8 1.5ZM0 2.3L0.9 3.8L1.8 2.3Z" fill="rgba(70,70,95,.32)"/></svg>
<span class="t" style="left:1895.50px;top:836.92px;font-size:10.60px;line-height:12.72px;color:#33363b;transform:scaleX(0.9809);">Цена</span>
<svg style="left:1925.50px;top:840.20px;" width="3.6" height="7.6" viewBox="0 0 1.8 3.8"><path d="M0 1.5L0.9 0L1.8 1.5ZM0 2.3L0.9 3.8L1.8 2.3Z" fill="rgba(70,70,95,.32)"/></svg>
<div class="r" style="left:683.80px;top:859.00px;width:89.92px;height:10.40px;background:#c58dfa;"></div>
<div class="r" style="left:792.80px;top:859.00px;width:87.78px;height:10.40px;background:#c58dfa;"></div>
<div class="r" style="left:899.20px;top:859.00px;width:87.45px;height:10.40px;background:#c58dfa;"></div>
<div class="r" style="left:1005.20px;top:859.00px;width:83.82px;height:10.40px;background:#ffb687;"></div>
<div class="r" style="left:1106.80px;top:859.00px;width:76.72px;height:10.40px;background:#ffb687;"></div>
<div class="r" style="left:1199.80px;top:859.00px;width:76.72px;height:10.40px;background:#ffb687;"></div>
<div class="r" style="left:1292.80px;top:859.00px;width:81.18px;height:10.40px;background:#ffb687;"></div>
<div class="r" style="left:1391.20px;top:859.00px;width:79.69px;height:10.40px;background:#8c8ff8;"></div>
<div class="r" style="left:1487.80px;top:859.00px;width:75.41px;height:10.40px;background:#8c8ff8;"></div>
<div class="r" style="left:1579.20px;top:859.00px;width:74.74px;height:10.40px;background:#8c8ff8;"></div>
<div class="r" style="left:1669.80px;top:859.00px;width:79.20px;height:10.40px;background:#8c8ff8;"></div>
<div class="r" style="left:1765.80px;top:859.00px;width:85.31px;height:10.40px;background:#70ddf4;"></div>
<div class="r" style="left:1869.20px;top:859.00px;width:56.10px;height:10.40px;background:#70ddf4;"></div>
<div class="r" style="left:683.10px;top:876.80px;width:1.70px;height:14.40px;background:#c58dfa;opacity:.6;"></div>
<div class="r" style="left:792.10px;top:876.80px;width:1.70px;height:14.40px;background:#c58dfa;opacity:.6;"></div>
<div class="r" style="left:898.50px;top:876.80px;width:1.70px;height:14.40px;background:#c58dfa;opacity:.6;"></div>
<div class="r" style="left:1004.50px;top:876.80px;width:1.70px;height:14.40px;background:#ffb687;opacity:.6;"></div>
<div class="r" style="left:1103.30px;top:876.80px;width:1.70px;height:14.40px;background:#ffb687;opacity:.6;"></div>
<div class="r" style="left:1196.30px;top:876.80px;width:1.70px;height:14.40px;background:#ffb687;opacity:.6;"></div>
<div class="r" style="left:1289.30px;top:876.80px;width:1.70px;height:14.40px;background:#ffb687;opacity:.6;"></div>
<div class="r" style="left:1390.50px;top:876.80px;width:1.70px;height:14.40px;background:#8c8ff8;opacity:.6;"></div>
<div class="r" style="left:1487.10px;top:876.80px;width:1.70px;height:14.40px;background:#8c8ff8;opacity:.6;"></div>
<div class="r" style="left:1578.50px;top:876.80px;width:1.70px;height:14.40px;background:#8c8ff8;opacity:.6;"></div>
<div class="r" style="left:1669.10px;top:876.80px;width:1.70px;height:14.40px;background:#8c8ff8;opacity:.6;"></div>
<div class="r" style="left:1765.10px;top:876.80px;width:1.70px;height:14.40px;background:#70ddf4;opacity:.6;"></div>
<div class="r" style="left:1868.50px;top:876.80px;width:1.70px;height:14.40px;background:#70ddf4;opacity:.6;"></div>
<div class="r" style="left:683.10px;top:896.00px;width:1.70px;height:14.40px;background:#c58dfa;opacity:.6;"></div>
<div class="r" style="left:792.10px;top:896.00px;width:1.70px;height:14.40px;background:#c58dfa;opacity:.6;"></div>
<div class="r" style="left:898.50px;top:896.00px;width:1.70px;height:14.40px;background:#c58dfa;opacity:.6;"></div>
<div class="r" style="left:1004.50px;top:896.00px;width:1.70px;height:14.40px;background:#ffb687;opacity:.6;"></div>
<div class="r" style="left:1103.30px;top:896.00px;width:1.70px;height:14.40px;background:#ffb687;opacity:.6;"></div>
<div class="r" style="left:1196.30px;top:896.00px;width:1.70px;height:14.40px;background:#ffb687;opacity:.6;"></div>
<div class="r" style="left:1289.30px;top:896.00px;width:1.70px;height:14.40px;background:#ffb687;opacity:.6;"></div>
<div class="r" style="left:1390.50px;top:896.00px;width:1.70px;height:14.40px;background:#8c8ff8;opacity:.6;"></div>
<div class="r" style="left:1487.10px;top:896.00px;width:1.70px;height:14.40px;background:#8c8ff8;opacity:.6;"></div>
<div class="r" style="left:1578.50px;top:896.00px;width:1.70px;height:14.40px;background:#8c8ff8;opacity:.6;"></div>
<div class="r" style="left:1669.10px;top:896.00px;width:1.70px;height:14.40px;background:#8c8ff8;opacity:.6;"></div>
<div class="r" style="left:1765.10px;top:896.00px;width:1.70px;height:14.40px;background:#70ddf4;opacity:.6;"></div>
<div class="r" style="left:1868.50px;top:896.00px;width:1.70px;height:14.40px;background:#70ddf4;opacity:.6;"></div>
<div class="r" style="left:683.10px;top:915.20px;width:1.70px;height:14.40px;background:#c58dfa;opacity:.6;"></div>
<div class="r" style="left:792.10px;top:915.20px;width:1.70px;height:14.40px;background:#c58dfa;opacity:.6;"></div>
<div class="r" style="left:898.50px;top:915.20px;width:1.70px;height:14.40px;background:#c58dfa;opacity:.6;"></div>
<div class="r" style="left:1004.50px;top:915.20px;width:1.70px;height:14.40px;background:#ffb687;opacity:.6;"></div>
<div class="r" style="left:1103.30px;top:915.20px;width:1.70px;height:14.40px;background:#ffb687;opacity:.6;"></div>
<div class="r" style="left:1196.30px;top:915.20px;width:1.70px;height:14.40px;background:#ffb687;opacity:.6;"></div>
<div class="r" style="left:1289.30px;top:915.20px;width:1.70px;height:14.40px;background:#ffb687;opacity:.6;"></div>
<div class="r" style="left:1390.50px;top:915.20px;width:1.70px;height:14.40px;background:#8c8ff8;opacity:.6;"></div>
<div class="r" style="left:1487.10px;top:915.20px;width:1.70px;height:14.40px;background:#8c8ff8;opacity:.6;"></div>
<div class="r" style="left:1578.50px;top:915.20px;width:1.70px;height:14.40px;background:#8c8ff8;opacity:.6;"></div>
<div class="r" style="left:1669.10px;top:915.20px;width:1.70px;height:14.40px;background:#8c8ff8;opacity:.6;"></div>
<div class="r" style="left:1765.10px;top:915.20px;width:1.70px;height:14.40px;background:#70ddf4;opacity:.6;"></div>
<div class="r" style="left:1868.50px;top:915.20px;width:1.70px;height:14.40px;background:#70ddf4;opacity:.6;"></div>
<span class="t" style="left:248.00px;top:856.42px;font-size:10.60px;line-height:12.72px;color:#303236;transform:scaleX(0.9608);">Россия</span>
<span class="t" style="left:738.24px;top:856.42px;font-size:10.60px;line-height:12.72px;color:#303236;">3,474,079</span>
<span class="t" style="left:850.28px;top:856.42px;font-size:10.60px;line-height:12.72px;color:#303236;">227,008</span>
<span class="t" style="left:953.08px;top:856.42px;font-size:10.60px;line-height:12.72px;color:#303236;">258,958</span>
<span class="t" style="left:1057.08px;top:856.42px;font-size:10.60px;line-height:12.72px;color:#303236;">127,972</span>
<span class="t" style="left:1162.07px;top:856.42px;font-size:10.60px;line-height:12.72px;color:#303236;">3,968</span>
<span class="t" style="left:1250.36px;top:856.42px;font-size:10.60px;line-height:12.72px;color:#303236;">11,331</span>
<span class="t" style="left:1346.98px;top:856.42px;font-size:10.60px;line-height:12.72px;color:#303236;">78,945</span>
<span class="t" style="left:1444.98px;top:856.42px;font-size:10.60px;line-height:12.72px;color:#303236;">68,149</span>
<span class="t" style="left:1539.47px;top:856.42px;font-size:10.60px;line-height:12.72px;color:#303236;">2,188</span>
<span class="t" style="left:1632.87px;top:856.42px;font-size:10.60px;line-height:12.72px;color:#303236;">7,812</span>
<span class="t" style="left:1724.36px;top:856.42px;font-size:10.60px;line-height:12.72px;color:#303236;">11,690</span>
<span class="t" style="left:1817.68px;top:856.42px;font-size:10.60px;line-height:12.72px;color:#303236;">179,779</span>
<span class="t" style="left:248.00px;top:876.92px;font-size:10.60px;line-height:12.72px;color:#303236;transform:scaleX(0.9849);">Амурская область</span>
<span class="t" style="left:429.60px;top:876.92px;font-size:10.60px;line-height:12.72px;color:#303236;transform:scaleX(0.9942);">Россия|Дальний Восток</span>
<span class="t" style="left:754.55px;top:876.92px;font-size:10.60px;line-height:12.72px;color:#303236;">11,112</span>
<span class="t" style="left:870.91px;top:876.92px;font-size:10.60px;line-height:12.72px;color:#303236;">218</span>
<span class="t" style="left:973.71px;top:876.92px;font-size:10.60px;line-height:12.72px;color:#303236;">487</span>
<span class="t" style="left:1077.71px;top:876.92px;font-size:10.60px;line-height:12.72px;color:#303236;">160</span>
<span class="t" style="left:1182.70px;top:876.92px;font-size:10.60px;line-height:12.72px;color:#303236;">8</span>
<span class="t" style="left:1270.21px;top:876.92px;font-size:10.60px;line-height:12.72px;color:#303236;">15</span>
<span class="t" style="left:1367.61px;top:876.92px;font-size:10.60px;line-height:12.72px;color:#303236;">89</span>
<span class="t" style="left:1465.61px;top:876.92px;font-size:10.60px;line-height:12.72px;color:#303236;">60</span>
<span class="t" style="left:1560.10px;top:876.92px;font-size:10.60px;line-height:12.72px;color:#303236;">0</span>
<span class="t" style="left:1653.50px;top:876.92px;font-size:10.60px;line-height:12.72px;color:#303236;">7</span>
<span class="t" style="left:1744.21px;top:876.92px;font-size:10.60px;line-height:12.72px;color:#303236;">26</span>
<span class="t" style="left:1838.31px;top:876.92px;font-size:10.60px;line-height:12.72px;color:#303236;">104</span>
<span class="t" style="left:248.00px;top:896.22px;font-size:10.60px;line-height:12.72px;color:#303236;transform:scaleX(0.9820);">Еврейская автономная область</span>
<span class="t" style="left:429.60px;top:896.22px;font-size:10.60px;line-height:12.72px;color:#303236;transform:scaleX(0.9942);">Россия|Дальний Восток</span>
<span class="t" style="left:758.87px;top:896.22px;font-size:10.60px;line-height:12.72px;color:#303236;">1,692</span>
<span class="t" style="left:876.81px;top:896.22px;font-size:10.60px;line-height:12.72px;color:#303236;">41</span>
<span class="t" style="left:979.61px;top:896.22px;font-size:10.60px;line-height:12.72px;color:#303236;">77</span>
<span class="t" style="left:1083.61px;top:896.22px;font-size:10.60px;line-height:12.72px;color:#303236;">15</span>
<span class="t" style="left:1182.70px;top:896.22px;font-size:10.60px;line-height:12.72px;color:#303236;">0</span>
<span class="t" style="left:1276.10px;top:896.22px;font-size:10.60px;line-height:12.72px;color:#303236;">2</span>
<span class="t" style="left:1368.40px;top:896.22px;font-size:10.60px;line-height:12.72px;color:#303236;">11</span>
<span class="t" style="left:1471.50px;top:896.22px;font-size:10.60px;line-height:12.72px;color:#303236;">5</span>
<span class="t" style="left:1560.10px;top:896.22px;font-size:10.60px;line-height:12.72px;color:#303236;">0</span>
<span class="t" style="left:1653.50px;top:896.22px;font-size:10.60px;line-height:12.72px;color:#303236;">0</span>
<span class="t" style="left:1750.10px;top:896.22px;font-size:10.60px;line-height:12.72px;color:#303236;">2</span>
<span class="t" style="left:1844.21px;top:896.22px;font-size:10.60px;line-height:12.72px;color:#303236;">16</span>
<span class="t" style="left:248.00px;top:915.12px;font-size:10.60px;line-height:12.72px;color:#303236;transform:scaleX(0.9870);">Забайкальский край</span>
<span class="t" style="left:429.60px;top:915.12px;font-size:10.60px;line-height:12.72px;color:#303236;transform:scaleX(0.9942);">Россия|Дальний Восток</span>
<span class="t" style="left:752.98px;top:915.12px;font-size:10.60px;line-height:12.72px;color:#303236;">16,351</span>
<span class="t" style="left:870.91px;top:915.12px;font-size:10.60px;line-height:12.72px;color:#303236;">336</span>
<span class="t" style="left:973.71px;top:915.12px;font-size:10.60px;line-height:12.72px;color:#303236;">914</span>
<span class="t" style="left:1077.71px;top:915.12px;font-size:10.60px;line-height:12.72px;color:#303236;">205</span>
<span class="t" style="left:1182.70px;top:915.12px;font-size:10.60px;line-height:12.72px;color:#303236;">5</span>
<span class="t" style="left:1270.21px;top:915.12px;font-size:10.60px;line-height:12.72px;color:#303236;">10</span>
<span class="t" style="left:1361.71px;top:915.12px;font-size:10.60px;line-height:12.72px;color:#303236;">137</span>
<span class="t" style="left:1460.50px;top:915.12px;font-size:10.60px;line-height:12.72px;color:#303236;">117</span>
<span class="t" style="left:1560.10px;top:915.12px;font-size:10.60px;line-height:12.72px;color:#303236;">1</span>
<span class="t" style="left:1647.61px;top:915.12px;font-size:10.60px;line-height:12.72px;color:#303236;">15</span>
<span class="t" style="left:1744.21px;top:915.12px;font-size:10.60px;line-height:12.72px;color:#303236;">29</span>
<span class="t" style="left:1838.31px;top:915.12px;font-size:10.60px;line-height:12.72px;color:#303236;">179</span>
<div class="r" style="left:236.20px;top:814.60px;width:1699.80px;height:1.20px;background:rgba(40,44,66,.42);"></div>
<div class="r" style="left:236.20px;top:834.20px;width:1699.80px;height:1.20px;background:rgba(40,44,66,.42);"></div>
<div class="r" style="left:236.20px;top:853.40px;width:1699.80px;height:1.20px;background:rgba(40,44,66,.42);"></div>
<div class="r" style="left:235.60px;top:815.20px;width:1.20px;height:38.80px;background:rgba(40,44,66,.42);"></div>
<div class="r" style="left:235.70px;top:854.00px;width:1.00px;height:70.00px;background:#c9ccd4;"></div>
<div class="r" style="left:417.80px;top:815.20px;width:1.20px;height:38.80px;background:rgba(40,44,66,.42);"></div>
<div class="r" style="left:417.80px;top:854.00px;width:1.20px;height:70.00px;background:#7d828d;"></div>
<div class="r" style="left:682.00px;top:815.20px;width:1.20px;height:38.80px;background:rgba(40,44,66,.42);"></div>
<div class="r" style="left:682.00px;top:854.00px;width:1.00px;height:70.00px;background:rgba(70,74,90,.62);"></div>
<div class="r" style="left:791.00px;top:834.80px;width:1.20px;height:19.20px;background:rgba(40,44,66,.42);"></div>
<div class="r" style="left:791.00px;top:854.00px;width:1.00px;height:70.00px;background:rgba(70,74,90,.62);"></div>
<div class="r" style="left:897.40px;top:834.80px;width:1.20px;height:19.20px;background:rgba(40,44,66,.42);"></div>
<div class="r" style="left:897.40px;top:854.00px;width:1.00px;height:70.00px;background:rgba(70,74,90,.62);"></div>
<div class="r" style="left:1003.40px;top:815.20px;width:1.20px;height:38.80px;background:rgba(40,44,66,.42);"></div>
<div class="r" style="left:1003.40px;top:854.00px;width:1.00px;height:70.00px;background:rgba(70,74,90,.62);"></div>
<div class="r" style="left:1105.00px;top:834.80px;width:1.20px;height:19.20px;background:rgba(40,44,66,.42);"></div>
<div class="r" style="left:1105.00px;top:854.00px;width:1.00px;height:70.00px;background:rgba(70,74,90,.62);"></div>
<div class="r" style="left:1198.00px;top:834.80px;width:1.20px;height:19.20px;background:rgba(40,44,66,.42);"></div>
<div class="r" style="left:1198.00px;top:854.00px;width:1.00px;height:70.00px;background:rgba(70,74,90,.62);"></div>
<div class="r" style="left:1291.00px;top:834.80px;width:1.20px;height:19.20px;background:rgba(40,44,66,.42);"></div>
<div class="r" style="left:1291.00px;top:854.00px;width:1.00px;height:70.00px;background:rgba(70,74,90,.62);"></div>
<div class="r" style="left:1389.40px;top:815.20px;width:1.20px;height:38.80px;background:rgba(40,44,66,.42);"></div>
<div class="r" style="left:1389.40px;top:854.00px;width:1.00px;height:70.00px;background:rgba(70,74,90,.62);"></div>
<div class="r" style="left:1486.00px;top:834.80px;width:1.20px;height:19.20px;background:rgba(40,44,66,.42);"></div>
<div class="r" style="left:1486.00px;top:854.00px;width:1.00px;height:70.00px;background:rgba(70,74,90,.62);"></div>
<div class="r" style="left:1577.40px;top:834.80px;width:1.20px;height:19.20px;background:rgba(40,44,66,.42);"></div>
<div class="r" style="left:1577.40px;top:854.00px;width:1.00px;height:70.00px;background:rgba(70,74,90,.62);"></div>
<div class="r" style="left:1668.00px;top:834.80px;width:1.20px;height:19.20px;background:rgba(40,44,66,.42);"></div>
<div class="r" style="left:1668.00px;top:854.00px;width:1.00px;height:70.00px;background:rgba(70,74,90,.62);"></div>
<div class="r" style="left:1764.00px;top:815.20px;width:1.20px;height:38.80px;background:rgba(40,44,66,.42);"></div>
<div class="r" style="left:1764.00px;top:854.00px;width:1.00px;height:70.00px;background:rgba(70,74,90,.62);"></div>
<div class="r" style="left:1867.40px;top:834.80px;width:1.20px;height:19.20px;background:rgba(40,44,66,.42);"></div>
<div class="r" style="left:1867.40px;top:854.00px;width:1.00px;height:70.00px;background:rgba(70,74,90,.62);"></div>
<div class="r" style="left:1919.20px;top:854.00px;width:16.60px;height:70.00px;background:#0a6cff;border-left:1.6px solid #111;border-right:1px solid #111;"></div>
<div class="r" style="left:1919.20px;top:854.00px;width:16.60px;height:17.40px;background:#1b1b1f;"></div>
<svg style="left:1923.80px;top:860.00px;" width="8.0" height="5.2" viewBox="0 0 4 2.6"><path d="M0 2.6L2 0L4 2.6Z" fill="#2f7bff"/></svg>
<svg style="left:10.20px;top:29.20px;" width="13.20" height="8.40" viewBox="0 0 32 20"><path d="M0 10C6 2 12 0 16 0S26 2 32 10C26 18 20 20 16 20S6 18 0 10Z" fill="#34363b"/><circle cx="16" cy="10" r="6.2" fill="#fff"/><circle cx="16" cy="10" r="3.8" fill="#34363b"/></svg>
<svg style="left:10.40px;top:56.40px;" width="12.40" height="9.20" viewBox="0 0 24 18.4"><rect x="0" y="0.3" width="4.6" height="3.6" fill="#55585e"/><rect x="8" y="0.8" width="16" height="2.8" fill="#55585e"/><rect x="0" y="7.3" width="4.6" height="3.6" fill="#55585e"/><rect x="8" y="7.8" width="16" height="2.8" fill="#55585e"/><rect x="0" y="14.3" width="4.6" height="3.6" fill="#55585e"/><rect x="8" y="14.8" width="16" height="2.8" fill="#55585e"/></svg>
<svg style="left:10.20px;top:83.80px;" width="13.20" height="9.60" viewBox="0 0 32 22"><circle cx="16" cy="6" r="5.5" fill="#34363b"/><path d="M5 22C5 15 10 12.5 16 12.5S27 15 27 22Z" fill="#34363b"/><circle cx="5" cy="7.5" r="3.6" fill="#34363b"/><circle cx="27" cy="7.5" r="3.6" fill="#34363b"/><path d="M0 19C0 14 2.5 12.5 6.5 12.5C4.5 14.5 3.8 16.5 3.8 19ZM32 19C32 14 29.500 12.5 25.5 12.5C27.5 14.5 28.2 16.5 28.2 19Z" fill="#34363b"/></svg>
<svg style="left:9.80px;top:118.40px;" width="14.00" height="11.20" viewBox="0 0 32 26"><polygon points="20.81,11.65 20.81,14.35 18.33,15.11 17.53,17.05 18.75,19.34 16.84,21.25 14.55,20.03 12.61,20.83 11.85,23.31 9.15,23.31 8.39,20.83 6.45,20.03 4.16,21.25 2.25,19.34 3.47,17.05 2.67,15.11 0.19,14.35 0.19,11.65 2.67,10.89 3.47,8.95 2.25,6.66 4.16,4.75 6.45,5.97 8.39,5.17 9.15,2.69 11.85,2.69 12.61,5.17 14.55,5.97 16.84,4.75 18.75,6.66 17.53,8.95 18.33,10.89" fill="#34363b"/><circle cx="10.5" cy="13" r="2.81" fill="#fff"/><polygon points="31.65,5.40 31.65,7.00 29.97,8.05 29.34,9.14 29.27,11.12 27.88,11.93 26.13,11.00 24.87,11.00 23.12,11.93 21.73,11.12 21.66,9.14 21.03,8.05 19.35,7.00 19.35,5.40 21.03,4.35 21.66,3.26 21.73,1.28 23.12,0.47 24.87,1.40 26.13,1.40 27.88,0.47 29.27,1.28 29.34,3.26 29.97,4.35" fill="#34363b"/><circle cx="25.5" cy="6.2" r="1.67" fill="#fff"/><polygon points="31.65,19.00 31.65,20.60 29.97,21.65 29.34,22.74 29.27,24.72 27.88,25.53 26.13,24.60 24.87,24.60 23.12,25.53 21.73,24.72 21.66,22.74 21.03,21.65 19.35,20.60 19.35,19.00 21.03,17.95 21.66,16.86 21.73,14.88 23.12,14.07 24.87,15.00 26.13,15.00 27.88,14.07 29.27,14.88 29.34,16.86 29.97,17.95" fill="#34363b"/><circle cx="25.5" cy="19.8" r="1.67" fill="#fff"/></svg>
<svg style="left:9.70px;top:155.90px;" width="11.00" height="10.20" viewBox="0 0 24 22"><rect x="0" y="0" width="24" height="22" rx="3.5" fill="#5cbf9d"/><path d="M5.500 4.500V17H19" stroke="#fff" stroke-width="2.200" fill="none"/><path d="M8.500 13L12 9.500L14.500 12L18.500 7.500" stroke="#fff" stroke-width="2.2" fill="none"/></svg>
<svg style="left:16.40px;top:186.20px;" width="11.20" height="10.80" viewBox="0 0 24 24"><path d="M3 3L21 21M21 3L3 21" stroke="#34363b" stroke-width="5" stroke-linecap="round"/><circle cx="4" cy="4" r="3.6" fill="#34363b"/><circle cx="20.500" cy="3.5" r="3.4" fill="#34363b"/><circle cx="3.5" cy="20.5" r="3.2" fill="#34363b"/><circle cx="20.5" cy="20.5" r="3.4" fill="#34363b"/><circle cx="12" cy="12" r="1.6" fill="#fff"/></svg>
<svg style="left:16.80px;top:217.70px;" width="11.20" height="8.60" viewBox="0 0 26 19"><path d="M1.500 0V17.5H26" stroke="#9ad6c2" stroke-width="3" fill="none"/><path d="M6 13L11.500 7L15.500 11L22.500 3.5" stroke="#9ad6c2" stroke-width="3" fill="none" stroke-linecap="round" stroke-linejoin="round"/><path d="M18 2.500H24V8.500Z" fill="#9ad6c2"/></svg>
<svg style="left:23.80px;top:248.40px;" width="9.60" height="9.60" viewBox="0 0 24 24"><circle cx="12" cy="12" r="12" fill="#34363b"/><path d="M12 5.500V18.5M5.500 12H18.500" stroke="#fff" stroke-width="3.6"/></svg>
<svg style="left:23.10px;top:275.20px;" width="11.00" height="10.80" viewBox="0 0 24 24"><path d="M11 3A10.500 10.500 0 1 0 21.500 13.5H11Z" fill="#34363b"/><path d="M13.500 0A10.500 10.500 0 0 1 24 10.500H13.5Z" fill="#34363b"/><path d="M13.500 13.5H24A10.500 10.500 0 0 1 20.500 21Z" fill="#34363b"/></svg>
<svg style="left:23.30px;top:303.60px;" width="11.00" height="10.80" viewBox="0 0 24 24"><path d="M11 3A10.500 10.500 0 1 0 21.500 13.5H11Z" fill="#5cbf9d"/><path d="M13.500 0A10.500 10.500 0 0 1 24 10.500H13.5Z" fill="#5cbf9d"/><path d="M13.500 13.5H24A10.500 10.500 0 0 1 20.500 21Z" fill="#5cbf9d"/></svg>
<svg style="left:23.00px;top:333.30px;" width="11.20" height="8.60" viewBox="0 0 26 19"><path d="M1.500 0V17.5H26" stroke="#34363b" stroke-width="3" fill="none"/><path d="M6 13L11.500 7L15.500 11L22.500 3.5" stroke="#34363b" stroke-width="3" fill="none" stroke-linecap="round" stroke-linejoin="round"/><path d="M18 2.500H24V8.500Z" fill="#34363b"/></svg>
<svg style="left:10.00px;top:366.60px;" width="14.00" height="11.20" viewBox="0 0 32 26"><polygon points="20.81,11.65 20.81,14.35 18.33,15.11 17.53,17.05 18.75,19.34 16.84,21.25 14.55,20.03 12.61,20.83 11.85,23.31 9.15,23.31 8.39,20.83 6.45,20.03 4.16,21.25 2.25,19.34 3.47,17.05 2.67,15.11 0.19,14.35 0.19,11.65 2.67,10.89 3.47,8.95 2.25,6.66 4.16,4.75 6.45,5.97 8.39,5.17 9.15,2.69 11.85,2.69 12.61,5.17 14.55,5.97 16.84,4.75 18.75,6.66 17.53,8.95 18.33,10.89" fill="#34363b"/><circle cx="10.5" cy="13" r="2.81" fill="#fff"/><polygon points="31.65,5.40 31.65,7.00 29.97,8.05 29.34,9.14 29.27,11.12 27.88,11.93 26.13,11.00 24.87,11.00 23.12,11.93 21.73,11.12 21.66,9.14 21.03,8.05 19.35,7.00 19.35,5.40 21.03,4.35 21.66,3.26 21.73,1.28 23.12,0.47 24.87,1.40 26.13,1.40 27.88,0.47 29.27,1.28 29.34,3.26 29.97,4.35" fill="#34363b"/><circle cx="25.5" cy="6.2" r="1.67" fill="#fff"/><polygon points="31.65,19.00 31.65,20.60 29.97,21.65 29.34,22.74 29.27,24.72 27.88,25.53 26.13,24.60 24.87,24.60 23.12,25.53 21.73,24.72 21.66,22.74 21.03,21.65 19.35,20.60 19.35,19.00 21.03,17.95 21.66,16.86 21.73,14.88 23.12,14.07 24.87,15.00 26.13,15.00 27.88,14.07 29.27,14.88 29.34,16.86 29.97,17.95" fill="#34363b"/><circle cx="25.5" cy="19.8" r="1.67" fill="#fff"/></svg>
<svg style="left:16.60px;top:397.00px;" width="11.20" height="10.80" viewBox="0 0 24 24"><path d="M3 3L21 21M21 3L3 21" stroke="#34363b" stroke-width="5" stroke-linecap="round"/><circle cx="4" cy="4" r="3.6" fill="#34363b"/><circle cx="20.500" cy="3.5" r="3.4" fill="#34363b"/><circle cx="3.5" cy="20.5" r="3.2" fill="#34363b"/><circle cx="20.5" cy="20.5" r="3.4" fill="#34363b"/><circle cx="12" cy="12" r="1.6" fill="#fff"/></svg>
<svg style="left:16.80px;top:426.30px;" width="10.80" height="9.00" viewBox="0 0 26 22"><rect x="0" y="0" width="26" height="22" rx="4" fill="#34363b"/><rect x="7" y="5" width="13" height="10" rx="1" fill="#a9abb0"/><rect x="4" y="17" width="18" height="1.8" fill="#a9abb0"/></svg>
<svg style="left:178.00px;top:160.70px;" width="6.40" height="4.20" viewBox="0 0 14 9"><path d="M1 1L7 6.500L13 1" stroke="#4c2f7a" stroke-width="3.6" fill="none"/></svg>
<svg style="left:179.70px;top:189.60px;" width="4.20" height="6.40" viewBox="0 0 9 14"><path d="M7.500 1L2 7L7.500 13" stroke="#4c2f7a" stroke-width="3.6" fill="none"/></svg>
<svg style="left:178.00px;top:221.10px;" width="6.40" height="4.20" viewBox="0 0 14 9"><path d="M1 1L7 6.500L13 1" stroke="#4c2f7a" stroke-width="3.6" fill="none"/></svg>
<svg style="left:178.00px;top:371.50px;" width="6.40" height="4.20" viewBox="0 0 14 9"><path d="M1 1L7 6.500L13 1" stroke="#4c2f7a" stroke-width="3.6" fill="none"/></svg>
<svg style="left:10.20px;top:898.60px;" width="7.60" height="7.60" viewBox="0 0 24 24"><circle cx="12" cy="12" r="12" fill="#5cbf9d"/><rect x="10.300" y="10" width="3.4" height="8.500" fill="#fff"/><circle cx="12" cy="6.300" r="2.1" fill="#fff"/></svg>
<svg style="left:230.20px;top:77.30px;" width="13.60" height="11.80" viewBox="0 0 24 21"><path d="M17 12V19.500H2.500V5H11" stroke="#fff" stroke-width="2.600" fill="none"/><path d="M9 15.500L10 11L19.500 1.500L23 5L13.500 14.500Z" fill="#fff"/></svg>
<svg style="left:1719.60px;top:342.00px;" width="13.20" height="11.20" viewBox="0 0 26 22"><path d="M2 4H7.500L9 1.500H17L18.500 4H24A2 2 0 0 1 26 6V19A2 2 0 0 1 24 21H2A2 2 0 0 1 0 19V6A2 2 0 0 1 2 4Z" fill="#c6c6c6"/><circle cx="13" cy="12.500" r="5.6" fill="#fff"/><circle cx="13" cy="12.5" r="3.2" fill="#c6c6c6"/></svg>
<svg style="left:1746.20px;top:340.80px;" width="13.60" height="13.60" viewBox="0 0 26 26"><circle cx="10" cy="10" r="8.300" fill="none" stroke="#6a6a6a" stroke-width="3.4"/><path d="M16 16L24.500 24.500" stroke="#6a6a6a" stroke-width="4.600" stroke-linecap="round"/><path d="M10 5.500V14.500M5.500 10H14.500" stroke="#6a6a6a" stroke-width="2.600"/></svg>
<svg style="left:1766.00px;top:341.00px;" width="13.20" height="13.20" viewBox="0 0 26 26"><path d="M13 2V24M2 13H24" stroke="#c6c6c6" stroke-width="2.400"/><path d="M13 0L9.500 4.500H16.500ZM13 26L9.500 21.500H16.500ZM0 13L4.500 9.500V16.500ZM26 13L21.500 9.500V16.500Z" fill="#c6c6c6"/></svg>
<svg style="left:1785.60px;top:341.20px;" width="14.00" height="12.80" viewBox="0 0 28 26"><rect x="1.200" y="1.200" width="25.6" height="23.600" fill="none" stroke="#c6c6c6" stroke-width="2.400" stroke-dasharray="3.6 2.6"/></svg>
<svg style="left:1805.00px;top:341.20px;" width="13.60" height="12.80" viewBox="0 0 28 26"><ellipse cx="14" cy="10" rx="12" ry="8.500" fill="none" stroke="#c6c6c6" stroke-width="2.600"/><path d="M7 17C6 20 7 23 4 25" fill="none" stroke="#c6c6c6" stroke-width="2.400" stroke-linecap="round"/><circle cx="7.500" cy="18" r="2.4" fill="#c6c6c6"/></svg>
<svg style="left:1832.10px;top:341.50px;" width="12.20" height="12.20" viewBox="0 0 24 24"><rect x="0" y="0" width="24" height="24" rx="3" fill="#c6c6c6"/><path d="M12 5.500V18.500M5.500 12H18.500" stroke="#fff" stroke-width="4"/></svg>
<svg style="left:1852.10px;top:341.50px;" width="12.20" height="12.20" viewBox="0 0 24 24"><rect x="0" y="0" width="24" height="24" rx="3" fill="#c6c6c6"/><path d="M5.500 12H18.500" stroke="#fff" stroke-width="4"/></svg>
<svg style="left:1870.80px;top:341.20px;" width="13.60" height="12.80" viewBox="0 0 28 26"><path d="M3 3L25 23M25 3L3 23" stroke="#c6c6c6" stroke-width="2.200"/><path d="M0 0H8L0 8ZM28 0H20L28 8ZM0 26H8L0 18ZM28 26H20L28 18Z" fill="#c6c6c6"/></svg>
<svg style="left:1891.20px;top:342.20px;" width="13.20" height="11.20" viewBox="0 0 26 22"><path d="M13 1L0 12.500L2 14.500L13 5L24 14.500L26 12.500Z" fill="#c6c6c6"/><path d="M4.500 14L13 6.800L21.500 14V22H15.500V16H10.500V22H4.500Z" fill="#c6c6c6"/></svg>
<svg style="left:1917.80px;top:340.40px;" width="13.60" height="13.60" viewBox="0 0 26 26"><rect x="0" y="0" width="26" height="26" rx="2.500" fill="#16131d"/><rect x="5.500" y="12" width="3.4" height="9" fill="#fff"/><rect x="11.300" y="8" width="3.4" height="13" fill="#fff"/><rect x="17.100" y="12" width="3.4" height="9" fill="#fff"/><circle cx="7.200" cy="7.500" r="1.7" fill="#e88aa0"/><circle cx="13" cy="4.800" r="1.500" fill="#e88aa0"/><circle cx="18.800" cy="7.500" r="1.7" fill="#e88aa0"/></svg>
</div></body></html>
